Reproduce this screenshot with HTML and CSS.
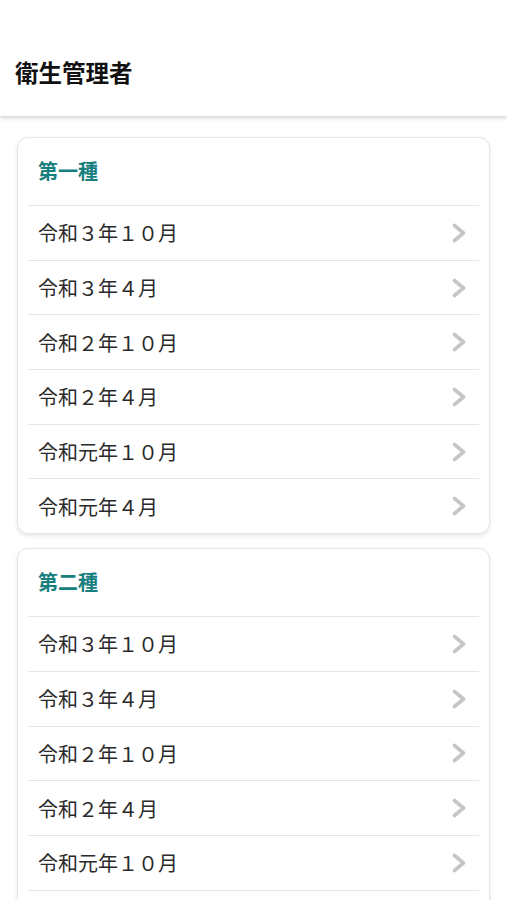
FILE: index.html
```html
<!DOCTYPE html>
<html lang="ja">
<head>
<meta charset="utf-8">
<link rel="stylesheet" href="styles.css">
</head>
<body>
<header class="header"><h1 class="title">衛生管理者</h1></header>
<main class="content">
  <section class="card">
    <h2 class="card-title">第一種</h2>
    <ul class="list">
      <li class="row"><span>令和３年１０月</span><svg class="chev" viewBox="0 0 16 20"><path d="M3.5 2.5 L12.5 10 L3.5 17.5"/></svg></li>
      <li class="row"><span>令和３年４月</span><svg class="chev" viewBox="0 0 16 20"><path d="M3.5 2.5 L12.5 10 L3.5 17.5"/></svg></li>
      <li class="row"><span>令和２年１０月</span><svg class="chev" viewBox="0 0 16 20"><path d="M3.5 2.5 L12.5 10 L3.5 17.5"/></svg></li>
      <li class="row"><span>令和２年４月</span><svg class="chev" viewBox="0 0 16 20"><path d="M3.5 2.5 L12.5 10 L3.5 17.5"/></svg></li>
      <li class="row"><span>令和元年１０月</span><svg class="chev" viewBox="0 0 16 20"><path d="M3.5 2.5 L12.5 10 L3.5 17.5"/></svg></li>
      <li class="row"><span>令和元年４月</span><svg class="chev" viewBox="0 0 16 20"><path d="M3.5 2.5 L12.5 10 L3.5 17.5"/></svg></li>
    </ul>
  </section>
  <section class="card">
    <h2 class="card-title">第二種</h2>
    <ul class="list">
      <li class="row"><span>令和３年１０月</span><svg class="chev" viewBox="0 0 16 20"><path d="M3.5 2.5 L12.5 10 L3.5 17.5"/></svg></li>
      <li class="row"><span>令和３年４月</span><svg class="chev" viewBox="0 0 16 20"><path d="M3.5 2.5 L12.5 10 L3.5 17.5"/></svg></li>
      <li class="row"><span>令和２年１０月</span><svg class="chev" viewBox="0 0 16 20"><path d="M3.5 2.5 L12.5 10 L3.5 17.5"/></svg></li>
      <li class="row"><span>令和２年４月</span><svg class="chev" viewBox="0 0 16 20"><path d="M3.5 2.5 L12.5 10 L3.5 17.5"/></svg></li>
      <li class="row"><span>令和元年１０月</span><svg class="chev" viewBox="0 0 16 20"><path d="M3.5 2.5 L12.5 10 L3.5 17.5"/></svg></li>
      <li class="row"><span>令和元年４月</span><svg class="chev" viewBox="0 0 16 20"><path d="M3.5 2.5 L12.5 10 L3.5 17.5"/></svg></li>
    </ul>
  </section>
</main>
</body>
</html>
```
FILE: styles.css
```css
* { box-sizing: border-box; }
html, body { margin: 0; padding: 0; background: #fff; }
body {
  font-family: "Noto Sans CJK JP", "Noto Sans", sans-serif;
  color: #222;
  overflow: hidden;
  height: 900px;
}
.header {
  height: 116px;
  background: #fff;
  box-shadow: 0 2px 4px rgba(0,0,0,0.18);
  display: flex;
  align-items: flex-end;
  padding: 0 0 29px 15px;
  position: relative;
  z-index: 1;
}
.title {
  margin: 0;
  font-size: 23.5px;
  font-weight: 700;
  color: #111;
  line-height: 30px;
}
.content {
  padding: 21px 17px 0 17px;
  display: flex;
  flex-direction: column;
  gap: 14px;
}
.card {
  border: 1px solid #e6e6e6;
  border-radius: 11px;
  box-shadow: 0 2px 4px rgba(0,0,0,0.10);
  padding: 0 10px;
  background: #fff;
}
.card-title {
  margin: 0;
  height: 67px;
  display: flex;
  align-items: center;
  padding: 0 0 2px 10px;
  font-size: 20px;
  font-weight: 700;
  color: #17807f;
}
.list { list-style: none; margin: 0; padding: 0; }
.row {
  height: 54.7px;
  border-top: 1px solid #e6e6e6;
  display: flex;
  align-items: center;
  justify-content: space-between;
  padding: 0 12px 0 10px;
  font-size: 20px;
  color: #2a2a2a;
}
.chev { width: 16px; height: 20px; }
.chev path { fill: none; stroke: #c6c6c6; stroke-width: 3.6; stroke-linecap: round; stroke-linejoin: round; }
```
